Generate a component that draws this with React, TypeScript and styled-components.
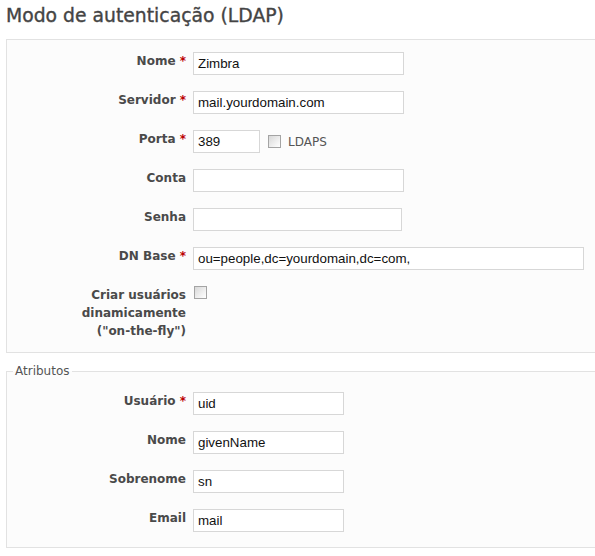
import * as React from "react";
import styled, { createGlobalStyle } from "styled-components";

const GlobalStyle = createGlobalStyle`
  html, body {
    margin: 0;
    padding: 0;
    background: #ffffff;
    overflow: hidden;
  }
  body {
    font-family: "DejaVu Sans", Verdana, sans-serif;
    font-size: 12px;
    color: #484848;
  }
`;

interface IField {
  label: React.ReactNode;
  required?: boolean;
  children: React.ReactNode;
}

const Field = ({ label, required, children }: IField) => (
  <>
    <Label>
      {label}
      {required && <Required> *</Required>}
    </Label>
    <Control>{children}</Control>
  </>
);

export default function App() {
  return (
    <Page>
      <GlobalStyle />
      <Title>Modo de autenticação (LDAP)</Title>
      <Box>
        <Field label="Nome" required>
          <TextInput $width={211} defaultValue="Zimbra" />
        </Field>
        <Field label="Servidor" required>
          <TextInput $width={211} defaultValue="mail.yourdomain.com" />
        </Field>
        <Field label="Porta" required>
          <TextInput $width={67} defaultValue="389" />
          <Check />
          <InlineLabel>LDAPS</InlineLabel>
        </Field>
        <Field label="Conta">
          <TextInput $width={211} />
        </Field>
        <Field label="Senha">
          <TextInput $width={209} type="password" />
        </Field>
        <Field label="DN Base" required>
          <TextInput $width={391} defaultValue="ou=people,dc=yourdomain,dc=com," />
        </Field>
        <Field
          label={
            <>
              Criar usuários
              <br />
              dinamicamente
              <br />
              ("on-the-fly")
            </>
          }
        >
          <TopCheck />
        </Field>
      </Box>
      <Fieldset>
        <Legend>Atributos</Legend>
        <Grid>
          <Field label="Usuário" required>
            <TextInput $width={151} defaultValue="uid" />
          </Field>
          <Field label="Nome">
            <TextInput $width={151} defaultValue="givenName" />
          </Field>
          <Field label="Sobrenome">
            <TextInput $width={151} defaultValue="sn" />
          </Field>
          <Field label="Email">
            <TextInput $width={151} defaultValue="mail" />
          </Field>
        </Grid>
      </Fieldset>
    </Page>
  );
}

const Page = styled.div`
  width: 640px;
  padding: 0 0 0 6px;
`;

const Title = styled.h2`
  margin: 0 0 11px 0;
  padding-top: 4px;
  font-size: 18.8px;
  line-height: 24px;
  font-weight: normal;
  color: #444444;
  -webkit-text-stroke: 0.35px #444444;
`;

const Box = styled.div`
  display: grid;
  grid-template-columns: 179px 1fr;
  column-gap: 7px;
  row-gap: 16px;
  padding: 12px 0 12px 0;
  background: #fcfcfc;
  border: 1px solid #e2e2e2;
`;

const Grid = styled.div`
  display: grid;
  grid-template-columns: 179px 1fr;
  column-gap: 7px;
  row-gap: 16px;
`;

const Fieldset = styled.fieldset`
  margin: 11px 0 0 0;
  padding: 14px 0 15px 0;
  background: #fcfcfc;
  border: 1px solid #e2e2e2;
  min-width: 0;
`;

const Legend = styled.legend`
  margin-left: 6px;
  padding: 0 2px;
  font-size: 12px;
  line-height: 14px;
  color: #555555;
`;

const Label = styled.label`
  text-align: right;
  font-weight: bold;
  line-height: 18px;
  color: #4a4a4a;
`;

const Required = styled.span`
  color: #bb0000;
`;

const Control = styled.div`
  display: flex;
  align-items: center;
  min-height: 18px;
`;

const TextInput = styled.input<{ $width: number }>`
  box-sizing: border-box;
  width: ${(p) => p.$width}px;
  height: 23px;
  padding: 0 4px;
  border: 1px solid #d7d7d7;
  background: #ffffff;
  font-family: "Liberation Sans", Arial, sans-serif;
  font-size: 13.33px;
  color: #111111;
  outline: none;
`;

const Check = styled.input.attrs({ type: "checkbox" })`
  appearance: none;
  box-sizing: border-box;
  width: 13px;
  height: 13px;
  margin: 0 7px 0 8px;
  border: 1px solid #a4a4a4;
  background: linear-gradient(135deg, #d8d8d8 0%, #f4f4f4 70%, #ffffff 100%);
`;

const TopCheck = styled(Check)`
  align-self: flex-start;
  margin: 0 0 0 1px;
`;

const InlineLabel = styled.span`
  color: #555555;
  font-size: 12px;
`;
